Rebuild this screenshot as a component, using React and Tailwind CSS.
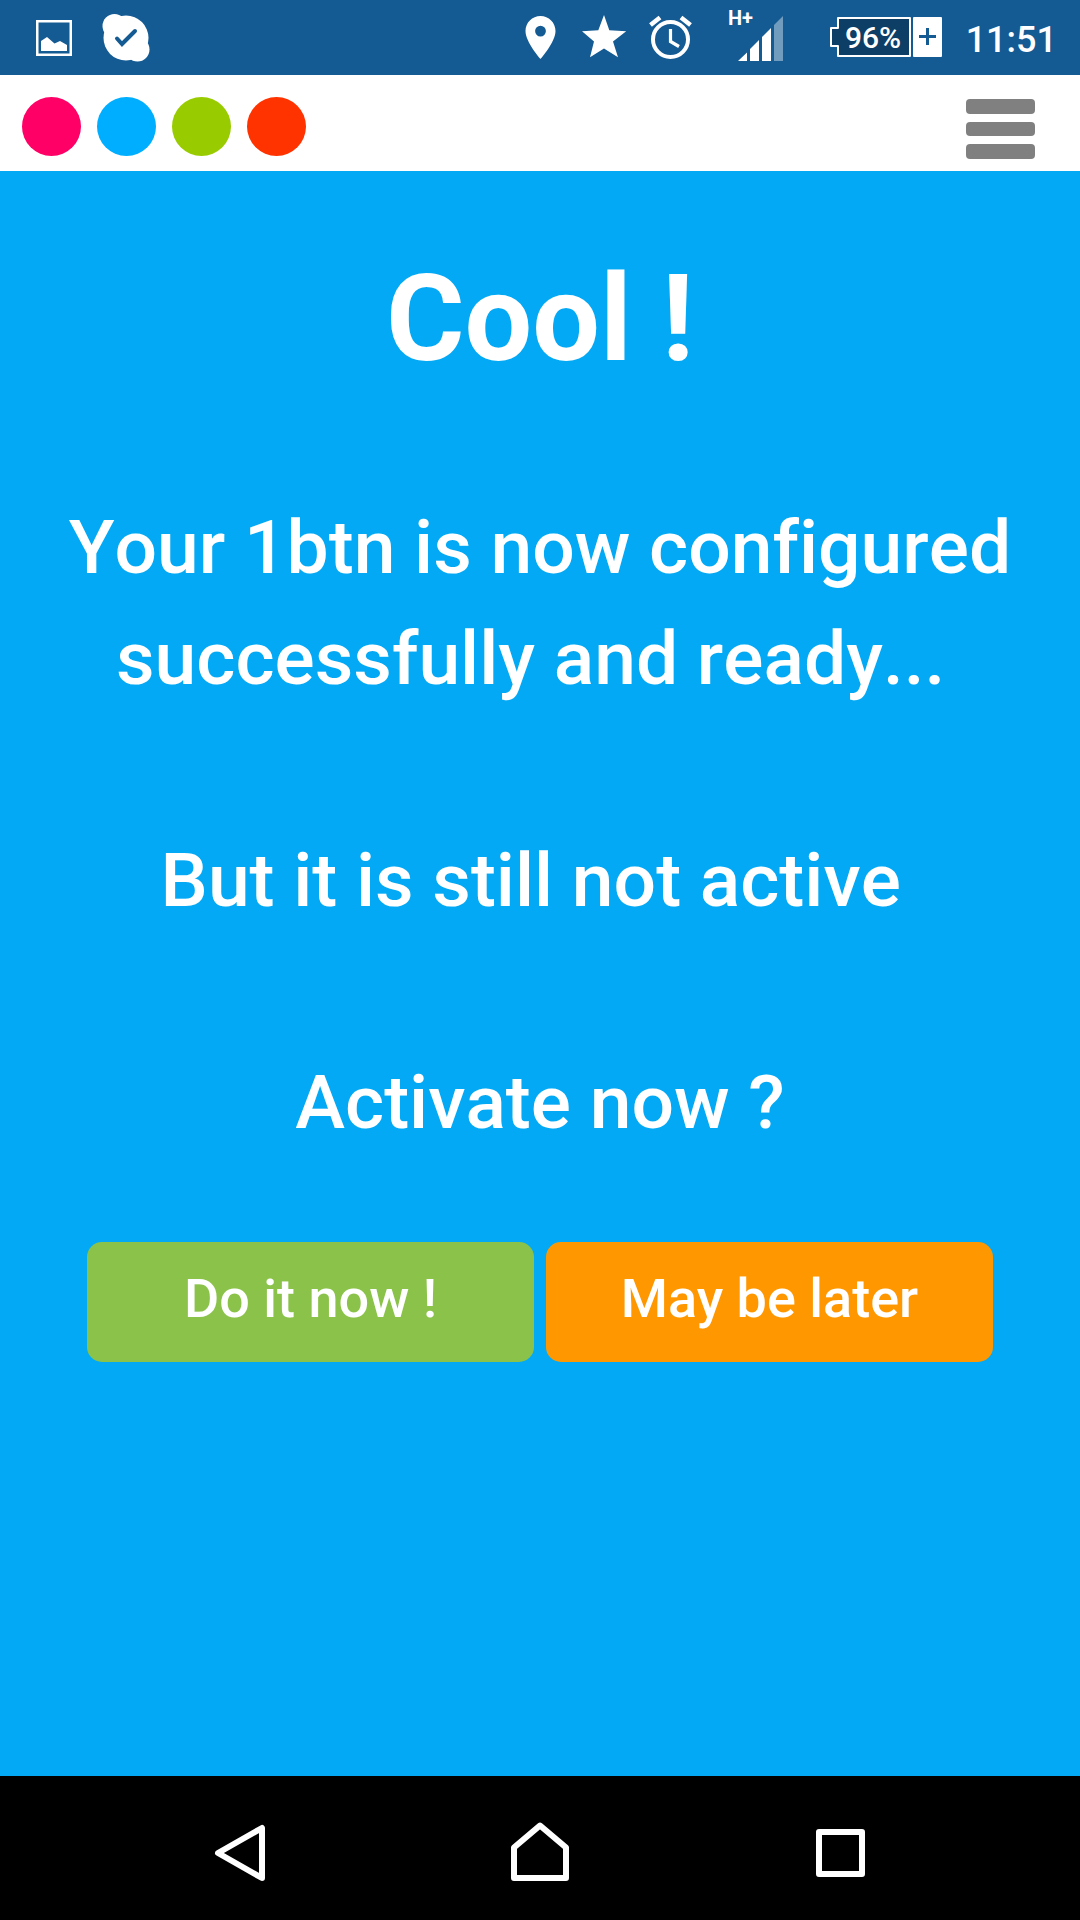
import React from 'react';

function StatusBar() {
  return (
    <div className="flex h-[75px] shrink-0 items-center justify-between bg-[#145a93] pl-9 pr-[23px] text-white">
      <div className="flex gap-[30px]">
        <svg className="h-[75px] w-9" viewBox="36 0 36 75" fill="none" aria-label="Picture">
          <rect x="37.25" y="21.25" width="33.5" height="33.5" stroke="currentColor" strokeWidth="2.5" />
          <path d="M41 51V41l6-4 7.5 6.500 5.500-2.500 7 4v6z" fill="currentColor" />
        </svg>
        <svg className="h-[75px] w-12" viewBox="102 0 48 75" fill="none" aria-label="Skype">
          <circle cx="126" cy="38" r="22.500" fill="currentColor" />
          <circle cx="114.500" cy="26" r="12" fill="currentColor" />
          <circle cx="137.500" cy="49.500" r="12" fill="currentColor" />
          <path d="M117 38.500l5 5.500L135 31" stroke="#145a93" strokeWidth="4" strokeLinecap="round" />
        </svg>
      </div>
      <div className="flex items-center">
        <svg className="mr-[25px] h-[75px] w-8" viewBox="525 0 32 75" aria-label="Location">
          <path
            fill="currentColor"
            fillRule="evenodd"
            d="M540.500 16c-8.300 0-15 6.700-15 15 0 11.200 15 28 15 28s15-16.800 15-28c0-8.300-6.700-15-15-15zm0 9.700a5.400 5.400 0 1 1 0 10.800 5.400 5.400 0 0 1 0-10.800z"
          />
        </svg>
        <svg className="mr-[21px] h-[75px] w-[46px]" viewBox="582 0 46 75" aria-label="Star">
          <path fill="currentColor" d="M604 15l5.300 15.200 16.900 1L613 41.500l5 15.700L604 48.500l-14 8.700 4-15.700L582 31.200l16.300-1z" />
        </svg>
        <svg className="mr-[35px] h-[75px] w-11" viewBox="649 0 44 75" fill="none" stroke="currentColor" aria-label="Alarm">
          <circle cx="670.500" cy="39.500" r="17.500" strokeWidth="4" />
          <path d="M670.500 29v12.500l8.500 5" strokeWidth="3.200" />
          <path d="M650.500 25l9.500-7.500M690.500 25l-9.500-7.500" strokeWidth="4.500" />
        </svg>
        <svg className="mr-[46px] h-[75px] w-14" viewBox="728 0 56 75" fill="currentColor" aria-label="Signal">
          <text x="728" y="25" fontSize="20" fontWeight="700">H+</text>
          <path d="M738 61l9-8.500V61zM750 61V49l9-9v21zM762 61V37l9-9v33z" />
          <path d="M774 61V25l9-9v45z" opacity=".4" />
        </svg>
        <svg className="mr-6 h-[75px] w-28" viewBox="830 0 112 75" aria-label="Battery">
          <path
            d="M838 18h72v38h-72v-10h-7V28h7z"
            fill="#0d3e66"
            stroke="currentColor"
            strokeWidth="2"
            strokeLinejoin="round"
          />
          <rect x="913" y="17" width="29" height="40" rx="1" fill="currentColor" />
          <path d="M919 36.500h17M927.500 28v17" stroke="#145a93" strokeWidth="3" />
          <text x="845" y="48" fontSize="30" fontWeight="500" fill="currentColor">96%</text>
        </svg>
        <time className="pt-1 text-[36px] leading-none font-medium">11:51</time>
      </div>
    </div>
  );
}

function Header() {
  return (
    <header className="flex h-24 shrink-0 items-center justify-between bg-white pt-1.5 pr-[45px] pl-[22px]">
      <div className="flex gap-4">
        <span className="size-[59px] rounded-full bg-[#ff0066]" />
        <span className="size-[59px] rounded-full bg-[#00aeff]" />
        <span className="size-[59px] rounded-full bg-[#99cc00]" />
        <span className="size-[59px] rounded-full bg-[#ff3300]" />
      </div>
      <button type="button" aria-label="Menu" className="mt-1.5 flex w-[69px] flex-col gap-2">
        <span className="h-[15px] rounded bg-[#808080]" />
        <span className="h-3.5 rounded bg-[#808080]" />
        <span className="h-[15px] rounded bg-[#808080]" />
      </button>
    </header>
  );
}

function NavButton({ label, children }) {
  return (
    <button type="button" aria-label={label} className="flex justify-center">
      <svg
        className="size-16"
        viewBox="0 0 64 64"
        fill="none"
        stroke="currentColor"
        strokeWidth="6"
        strokeLinejoin="round"
      >
        {children}
      </svg>
    </button>
  );
}

export default function App() {
  return (
    <div className="flex min-h-screen flex-col bg-[#03a9f4] font-['Roboto',sans-serif]">
      <StatusBar />
      <Header />
      <main className="grow pt-[88px] text-center font-medium text-white">
        <h1 className="text-[120px] leading-none font-bold">Cool !</h1>
        <div className="mt-[113px] text-[75px] leading-[111px] [font-kerning:none] [font-variant-ligatures:none]">
          <p>
            Your 1btn is now configured
            <br />
            successfully and ready...&nbsp;
          </p>
          <p className="mt-[111px]">But it is still not active&nbsp;</p>
          <p className="mt-[111px]">Activate now ?</p>
        </div>
        <div className="mt-[84px] grid grid-cols-2 gap-3 px-[87px] text-[54px]">
          <button type="button" className="h-[120px] rounded-[15px] bg-[#8bc34a] pb-2">
            Do it now !
          </button>
          <button type="button" className="h-[120px] rounded-[15px] bg-[#ff9800] pb-2">
            May be later
          </button>
        </div>
      </main>
      <nav className="grid h-36 shrink-0 grid-cols-3 items-center bg-black px-[90px] pt-2.5 text-white">
        <NavButton label="Back">
          <path d="M10 32L54 7v50z" />
        </NavButton>
        <NavButton label="Home">
          <path d="M6 26.500L32 4.500l26 22V57H6z" />
        </NavButton>
        <NavButton label="Recent apps">
          <rect x="11" y="11" width="43" height="42" />
        </NavButton>
      </nav>
    </div>
  );
}
